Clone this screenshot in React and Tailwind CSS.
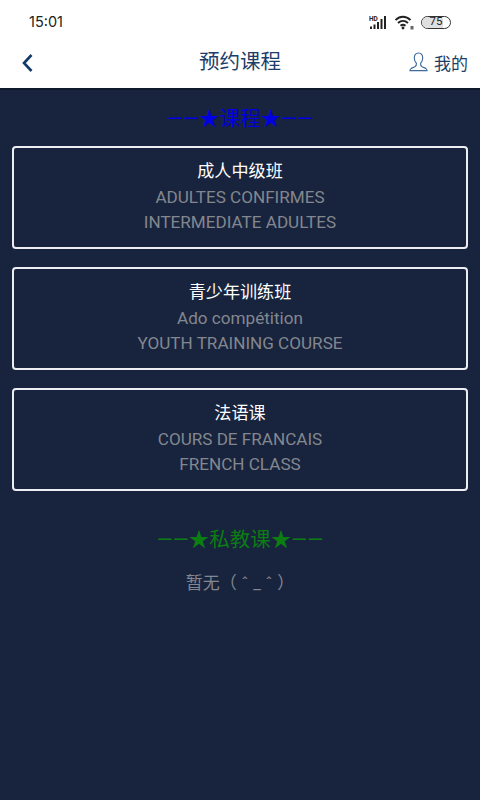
const courses = [
  { zh: "成人中级班", fr: "ADULTES CONFIRMES", en: "INTERMEDIATE ADULTES" },
  { zh: "青少年训练班", fr: "Ado compétition", en: "YOUTH TRAINING COURSE" },
  { zh: "法语课", fr: "COURS DE FRANCAIS", en: "FRENCH CLASS" },
];

const StatusIcons = () => (
  <div className="flex items-center">
    {/* Signal */}
    <svg width="19" height="15" viewBox="0 0 19 15" className="text-[#222]">
      <text x="0" y="5.5" fontSize="6.5" fontWeight="700" fill="currentColor" fontFamily="Roboto, sans-serif">HD</text>
      <rect x="1" y="11.5" width="2" height="2.5" fill="currentColor" />
      <rect x="4.5" y="9.5" width="2" height="4.5" fill="currentColor" />
      <rect x="8" y="7" width="2" height="7" fill="currentColor" />
      <rect x="11.5" y="4" width="2" height="10" fill="currentColor" />
      <rect x="15" y="1" width="2" height="13" fill="currentColor" />
    </svg>
    {/* Wifi */}
    <svg width="19" height="15" viewBox="0 0 19 15" fill="none" stroke="#222" strokeWidth="1.9" className="ml-[7px]">
      <path d="M0.5 5C5 0.6 11 0.6 15.5 5" />
      <path d="M3 8C6 5.2 10 5.2 13 8" />
      <path d="M5.5 10.8C7 9.6 9 9.6 10.5 10.8" />
      <circle cx="8" cy="13" r="1.4" fill="#222" stroke="none" />
      <rect x="15.5" y="11" width="3" height="3.5" fill="#666" stroke="none" />
    </svg>
    {/* Battery */}
    <div className="ml-[7px] relative w-[30px] h-[13px] rounded-[7px] border border-[#333] overflow-hidden flex items-center justify-center">
      <div className="absolute left-0 top-0 bottom-0 w-[75%] bg-[#dfdfdf]" />
      <span className="relative text-[11.5px] leading-none text-[#222] font-['Roboto',sans-serif]">75</span>
    </div>
  </div>
);

export default function App() {
  return (
    <div className="w-[480px] h-[800px] flex flex-col bg-[#18243d] font-['Roboto','Noto_Sans_CJK_SC',sans-serif]">
      <div className="h-[90px] bg-white flex flex-col shrink-0 border-b-2 border-[#101a2d]">
        <div className="h-[40px] px-[29px] flex items-center justify-between pt-[4px]">
          <span className="text-[14.5px] text-[#222] font-['Inter',sans-serif]">15:01</span>
          <StatusIcons />
        </div>
        <div className="relative flex-1 flex items-center justify-center pb-[4px]">
          <svg width="13" height="20" viewBox="0 0 13 20" fill="none" stroke="#123a66" strokeWidth="2.6" className="absolute left-[21px] top-[13px]">
            <path d="M10.5 2L3 10L10.5 18" />
          </svg>
          <span className="text-[20.5px] text-[#1c3d68]">预约课程</span>
          <div className="absolute right-[12px] top-[10px] flex items-center gap-[6px] text-[#1d3f66]">
            <svg width="19" height="20" viewBox="0 0 20 21" fill="none" stroke="#3f6a9b" strokeWidth="1.2" className="-mt-[3px]">
              <path d="M10 1C7 1 5.6 3.4 5.6 6.2C5.6 8.6 6.5 10.6 7.8 11.8C8 13.5 7.6 14.6 6.2 15.4L2.4 17.2C1.4 17.8 1 18.6 1 19.6H19C19 18.6 18.6 17.8 17.6 17.2L13.8 15.4C12.4 14.6 12 13.5 12.2 11.8C13.5 10.6 14.4 8.6 14.4 6.2C14.4 3.4 13 1 10 1Z" />
            </svg>
            <span className="text-[17px] leading-[25px] mt-[2px]">我的</span>
          </div>
        </div>
      </div>

      <div className="flex-1 flex flex-col px-[12px]">
        <p className="mt-[15px] h-[29px] leading-[29px] text-center text-[20.5px] text-[#0000e0] whitespace-nowrap">
          ——★课程★——
        </p>

        <div className="mt-[12px] flex flex-col gap-[18px]">
          {courses.map((c) => (
            <div
              key={c.zh}
              className="h-[103px] rounded-[4px] border-2 border-[#eceef2] pt-[11px] flex flex-col items-center text-[17.1px] leading-[25.5px]"
            >
              <span className="text-white">{c.zh}</span>
              <span className="text-[#83878f]">{c.fr}</span>
              <span className="text-[#83878f]">{c.en}</span>
            </div>
          ))}
        </div>

        <p className="mt-[34px] h-[30px] leading-[30px] text-center text-[20.5px] text-[#0b7d12] whitespace-nowrap">
          ——★私教课★——
        </p>
        <p className="mt-[15px] text-center text-[17px] leading-[26px] text-[#83878f] whitespace-pre">暂无（ ˆ _ ˆ ）</p>
      </div>
    </div>
  );
}
